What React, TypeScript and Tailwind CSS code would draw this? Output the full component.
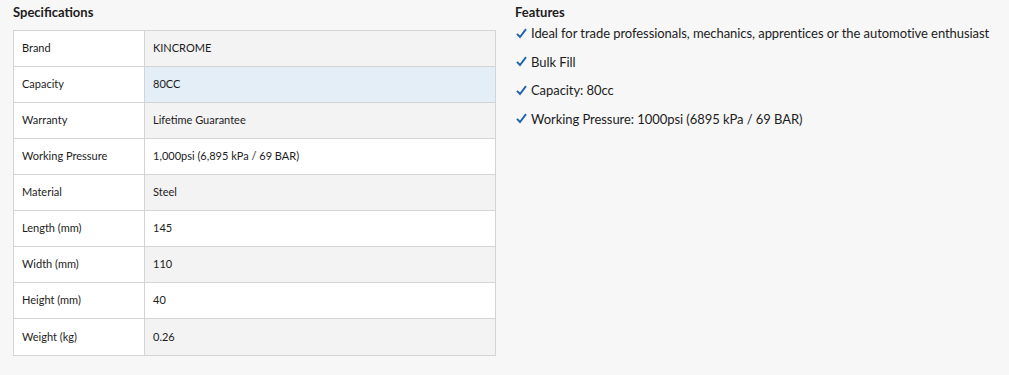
const specs: { label: string; value: string }[] = [
  { label: 'Brand', value: 'KINCROME' },
  { label: 'Capacity', value: '80CC' },
  { label: 'Warranty', value: 'Lifetime Guarantee' },
  { label: 'Working Pressure', value: '1,000psi (6,895 kPa / 69 BAR)' },
  { label: 'Material', value: 'Steel' },
  { label: 'Length (mm)', value: '145' },
  { label: 'Width (mm)', value: '110' },
  { label: 'Height (mm)', value: '40' },
  { label: 'Weight (kg)', value: '0.26' },
];

const features = [
  'Ideal for trade professionals, mechanics, apprentices or the automotive enthusiast',
  'Bulk Fill',
  'Capacity: 80cc',
  'Working Pressure: 1000psi (6895 kPa / 69 BAR)',
];

function Check() {
  return (
    <svg width="11" height="11" viewBox="0 0 11 11" className="shrink-0">
      <path d="M1 5.8 L4 9 L10 1.2" fill="none" stroke="#2162b0" strokeWidth="1.9" />
    </svg>
  );
}

function valueBg(i: number) {
  if (i === 1) return 'bg-[#e3eef6]';
  return i % 2 === 0 ? 'bg-[#f3f3f3]' : 'bg-white';
}

export default function App() {
  return (
    <div className="min-h-[375px] bg-[#f7f7f7] text-[#1c1c1c] font-['Lato',sans-serif] flex gap-[19px] pl-[13px] pt-[4px]">
      <section className="w-[483px] shrink-0">
        <h2 className="text-[13px] font-bold leading-[17px] pb-[9px]">Specifications</h2>
        <div className="border border-[#d4d4d4] bg-white">
          {specs.map((s, i) => (
            <div
              key={s.label}
              className={`flex h-[36px] text-[11px] ${i < specs.length - 1 ? 'border-b border-[#d4d4d4]' : ''}`}
            >
              <div className="w-[131px] shrink-0 border-r border-[#d4d4d4] bg-white flex items-center pl-[8px]">
                {s.label}
              </div>
              <div className={`flex-1 flex items-center pl-[8px] ${valueBg(i)}`}>{s.value}</div>
            </div>
          ))}
        </div>
      </section>

      <section className="flex flex-col">
        <h2 className="text-[13px] font-bold leading-[17px]">Features</h2>
        <ul className="flex flex-col gap-[10.6px] pt-[3px]">
          {features.map((f) => (
            <li
              key={f}
              className="flex items-center gap-[4px] text-[13px] leading-[18px] pl-[1px] tracking-[-0.06px]"
            >
              <Check />
              <span>{f}</span>
            </li>
          ))}
        </ul>
      </section>
    </div>
  );
}
